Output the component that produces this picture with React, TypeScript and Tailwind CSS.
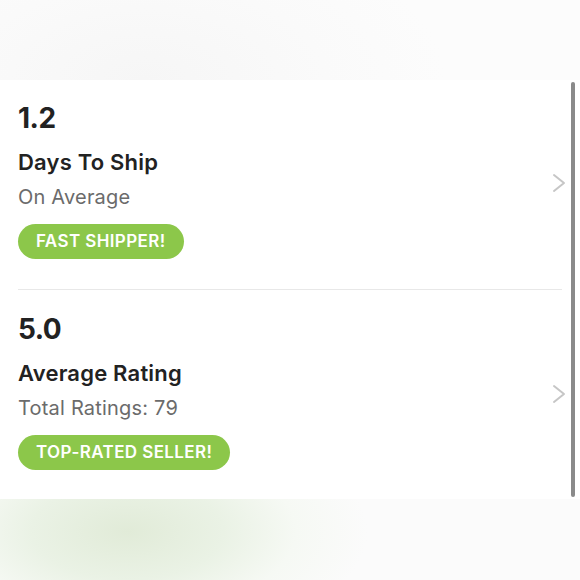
import React from 'react';

const Chevron = () => (
  <svg width="14" height="20" viewBox="0 0 14 20" fill="none" className="mt-[6px]">
    <polyline points="2,2 12,10 2,18" stroke="#c6c6c6" strokeWidth="2" strokeLinecap="round" strokeLinejoin="round" />
  </svg>
);

interface StatProps {
  value: string;
  title: string;
  sub: string;
  badge: string;
  className: string;
}

const StatRow: React.FC<StatProps> = ({ value, title, sub, badge, className }) => (
  <div className={`flex items-center pl-[18px] pr-[14px] ${className}`}>
    <div className="flex-1 flex flex-col items-start">
      <div className="text-[28px] leading-[34px] font-bold text-[#222] tracking-[-0.5px]">{value}</div>
      <div className="mt-[12px] text-[22px] leading-[30px] font-semibold text-[#222] tracking-[0.2px]">{title}</div>
      <div className="mt-[6px] text-[20px] leading-[28px] text-[#6b6b6b] tracking-[0.2px]">{sub}</div>
      <div className="mt-[13px] h-[35px] px-[18px] rounded-full bg-[#8cc74a] text-white text-[17px] font-semibold tracking-[0.4px] flex items-center">
        {badge}
      </div>
    </div>
    <Chevron />
  </div>
);

export default function App() {
  return (
    <div className="w-[580px] h-[580px] flex flex-col bg-white overflow-hidden" style={{ fontFamily: 'Inter, Lato, sans-serif' }}>
      <div className="h-[80px] bg-[radial-gradient(ellipse_300px_160px_at_25%_100%,#f6f6f6_0%,#fafafa_60%,#fcfcfc_100%)]" />
      <div className="relative h-[419px] bg-white flex flex-col">
        <StatRow
          value="1.2"
          title="Days To Ship"
          sub="On Average"
          badge="FAST SHIPPER!"
          className="pt-[21px] pb-[30px]"
        />
        <div className="mx-[18px] h-px bg-[#e8e8e8]" />
        <StatRow
          value="5.0"
          title="Average Rating"
          sub="Total Ratings: 79"
          badge="TOP-RATED SELLER!"
          className="pt-[22px]"
        />
        <div className="absolute right-[5px] top-[2px] bottom-[2px] w-[4px] rounded-full bg-[#8a8a8a]" />
      </div>
      <div className="flex-1 bg-[radial-gradient(ellipse_240px_120px_at_22%_40%,#e1ebd8_0%,#eaf2e5_40%,#f6f9f4_70%,#fbfbfb_100%)]" />
    </div>
  );
}
